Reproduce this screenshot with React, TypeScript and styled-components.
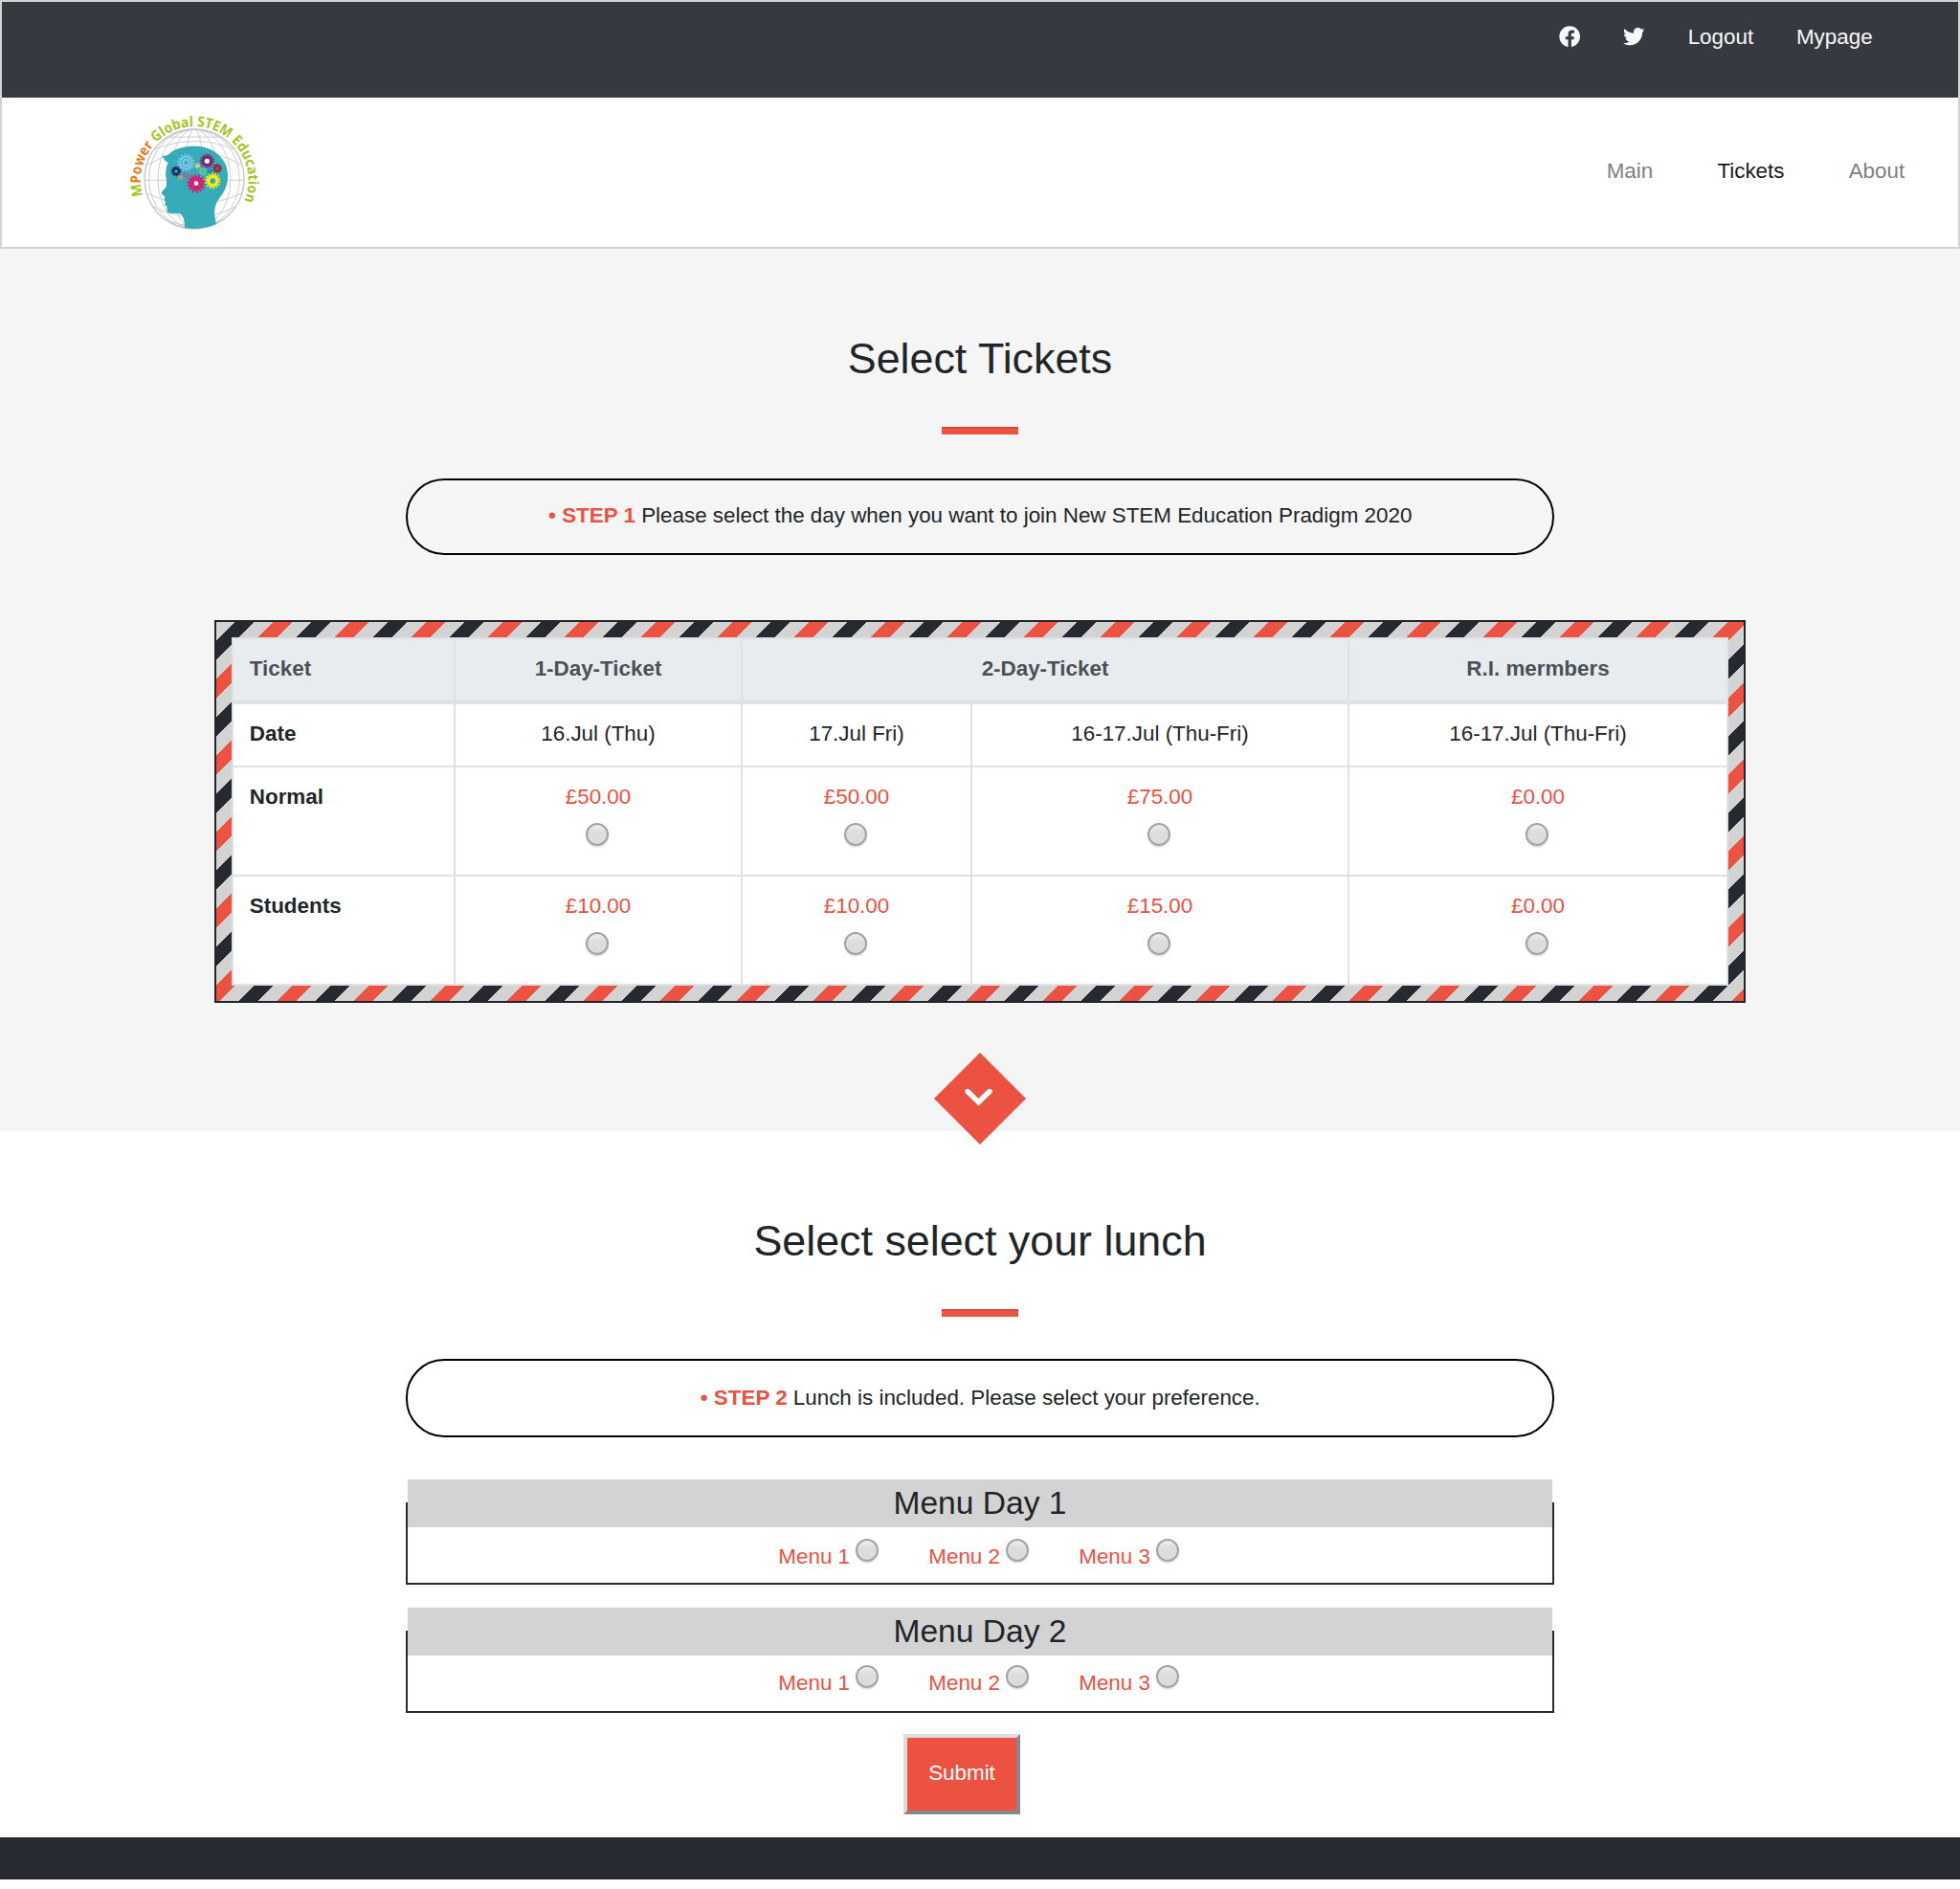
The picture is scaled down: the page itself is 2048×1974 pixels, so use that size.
import React from "react";
import styled, { createGlobalStyle } from "styled-components";
import { FaFacebook, FaTwitter } from "react-icons/fa";

const red = "#eb5242";
const ink = "#212529";
const navy = "#282a32";
const silver = "#d3d3d3";

const GlobalStyle = createGlobalStyle`
  *, *::before, *::after { box-sizing: border-box; }
  body {
    margin: 0;
    background: #fff;
    color: ${ink};
    font-family: "Liberation Sans", Arial, sans-serif;
    font-size: 22.4px;
    line-height: 33.6px;
  }
`;

const Header = styled.header`
  height: 260px;
  border: 2px solid ${silver};
  background: #fff;
`;

const TopBar = styled.div`
  display: flex;
  justify-content: flex-end;
  align-items: flex-start;
  gap: 44.8px;
  height: 100px;
  padding: 19.7px 89.4px 0 0;
  background: #363940;
  color: #f8f9fa;
`;

const TopLink = styled.a`
  display: block;
  color: inherit;
`;

const SocialLink = styled(TopLink)`
  padding-top: 5.1px;
  svg {
    display: block;
    width: 22.4px;
    height: 22.4px;
  }
`;

const NavBar = styled.div`
  display: flex;
  justify-content: space-between;
  align-items: flex-start;
  height: 156px;
  padding: 13px 55.8px 0 130px;
`;

const Nav = styled.nav`
  display: flex;
  gap: 67.2px;
  padding-top: 46.7px;
`;

const NavLink = styled.a<{ $active?: boolean }>`
  color: ${({ $active }) => ($active ? "#191919" : "#808080")};
`;

const Section = styled.section<{ $height: number; $tint?: boolean }>`
  display: flex;
  flex-direction: column;
  align-items: center;
  height: ${({ $height }) => $height}px;
  padding-top: 87px;
  background: ${({ $tint }) => ($tint ? "#f5f5f5" : "#fff")};
`;

const TicketSection = styled(Section)`
  position: relative;
  z-index: 1;
`;

const Title = styled.h2`
  margin: 0;
  font-size: 44.8px;
  line-height: 54px;
  font-weight: 400;
`;

const Rule = styled.hr`
  width: 80px;
  height: 8px;
  margin: 45px 0 0;
  border: 0;
  border-top: 2px solid #d54b3b;
  background: ${red};
`;

const Step = styled.p<{ $gap: number; $height: number; $inset: number }>`
  width: 1200px;
  height: ${({ $height }) => $height}px;
  margin: ${({ $gap }) => $gap}px 0 0;
  padding-top: ${({ $inset }) => $inset}px;
  padding-left: 0.5px;
  border: 2px solid #000;
  border-radius: 40px;
  text-align: center;
`;

const StepLabel = styled.strong`
  color: ${red};
`;

const AirmailFrame = styled.div`
  width: 1600px;
  height: 400px;
  margin-top: 68px;
  padding: 16px;
  border: 2px solid ${ink};
  background: linear-gradient(
      135deg,
      ${silver} 12.5%,
      #272930 12.5% 25%,
      ${silver} 25% 37.5%,
      ${red} 37.5% 50%,
      ${silver} 50% 62.5%,
      #272930 62.5% 75%,
      ${silver} 75% 87.5%,
      ${red} 87.5%
    )
    0 0 / 80px 80px;
`;

const TicketTable = styled.table`
  width: 1564px;
  height: 364px;
  table-layout: fixed;
  border-collapse: separate;
  border-spacing: 2px;
  background: #dee2e6;
`;

const Row = styled.tr<{ $height: number }>`
  height: ${({ $height }) => $height}px;
`;

const HeadCell = styled.th<{ $left?: boolean }>`
  padding: 13.7px 16px 0 ${({ $left }) => ($left ? 16.8 : 16)}px;
  border-bottom: 2px solid #dee2e6;
  background: #e9ecef;
  color: #495057;
  vertical-align: top;
  text-align: ${({ $left }) => ($left ? "left" : "center")};
`;

const RowHead = styled.th`
  padding: 13.7px 16px 0 16.8px;
  background: #fff;
  text-align: left;
  vertical-align: top;
`;

const Cell = styled.td`
  padding: 13.7px 16px 0;
  background: #fff;
  text-align: center;
  vertical-align: top;
`;

const Price = styled.label`
  display: flex;
  flex-direction: column;
  align-items: center;
  color: ${red};
`;

const Radio = styled.input.attrs({ type: "radio" })`
  appearance: none;
  display: block;
  flex: none;
  width: 24px;
  height: 24px;
  margin: 0;
  border: 2px solid #a3a3a3;
  border-radius: 50%;
  background: linear-gradient(#eeeeee 0%, #dddddd 40%, #dcdcdc 100%);
  box-shadow: 0 1.5px 1.5px rgba(0, 0, 0, 0.14);
`;

const PriceRadio = styled(Radio)`
  margin: 10.7px 1.6px 0 0;
`;

const Marker = styled.div`
  position: absolute;
  bottom: -13.7px;
  left: 50%;
  width: 96px;
  height: 96px;
  margin-left: -48px;
  svg { display: block; }
`;

const MenuSet = styled.div<{ $gap: number }>`
  width: 1200px;
  height: 110px;
  margin-top: ${({ $gap }) => $gap}px;
  padding: 0 2px;
  background:
    linear-gradient(${navy}, ${navy}) 0 100% / 2px 86px no-repeat,
    linear-gradient(${navy}, ${navy}) 100% 100% / 2px 86px no-repeat,
    linear-gradient(${navy}, ${navy}) 0 100% / 100% 2px no-repeat;
`;

const MenuTitle = styled.h3`
  height: 50px;
  margin: 0;
  background: ${silver};
  font-size: 33.6px;
  line-height: 50px;
  font-weight: 400;
  text-align: center;
`;

const MenuOptions = styled.div<{ $inset: number }>`
  display: flex;
  justify-content: center;
  gap: 48.2px;
  padding: ${({ $inset }) => $inset}px 0 0 1.4px;
`;

const MenuOption = styled.label`
  display: flex;
  align-items: flex-start;
  gap: 6.2px;
  padding-right: 3.9px;
  color: ${red};
`;

const OptionText = styled.span`
  padding-top: 1.7px;
`;

const SubmitButton = styled.button`
  width: 122px;
  height: 84px;
  margin: 22px 38px 0 0;
  padding: 0 0 2px;
  border: 4px solid;
  border-color: #dcdcdc #888 #888 #dcdcdc;
  background: ${red};
  color: #fff;
  font: inherit;
`;

const Footer = styled.footer`
  height: 44px;
  margin-bottom: 10px;
  border-bottom: 1px solid #2a2029;
  background: ${navy};
`;

interface GearProps {
  x: number;
  y: number;
  r: number;
  color: string;
  hole: string;
  ring?: string;
}

function Gear({ x, y, r, color, hole, ring }: GearProps) {
  const teeth = r > 18 ? 14 : 10;
  const toothRadius = r * 0.88;
  const dash = (Math.PI * toothRadius) / teeth;
  return (
    <g transform={`translate(${x} ${y})`} fill="none">
      <circle r={r * 0.78} fill={color} />
      <circle r={toothRadius} stroke={color} strokeWidth={r * 0.26} strokeDasharray={`${dash} ${dash}`} />
      {ring && <circle r={r * 0.53} stroke={ring} strokeWidth="3" />}
      <circle r={r * (ring ? 0.24 : 0.34)} fill={hole} />
    </g>
  );
}

const teal = "#37abb8";
const gears: GearProps[] = [
  { x: 223, y: 210, r: 27, color: "#7ccaea", hole: teal, ring: "#3f9fc0" },
  { x: 289, y: 205, r: 23, color: "#782a70", hole: "#fff" },
  { x: 192, y: 237, r: 16, color: "#23285f", hole: teal },
  { x: 321, y: 228, r: 15, color: "#a5232f", hole: "#4a6f9a" },
  { x: 259, y: 220, r: 9, color: "#dfd2a2", hole: "#c6a67a" },
  { x: 222, y: 249, r: 10, color: "#d84b93", hole: teal },
  { x: 276, y: 237, r: 13, color: "#68c2a1", hole: "#46ac9d" },
  { x: 298, y: 237, r: 8, color: "#1b70b3", hole: teal },
  { x: 205, y: 257, r: 8, color: "#c3a77c", hole: teal },
  { x: 255, y: 275, r: 29, color: "#d91b73", hole: "#fff", ring: "#a83f86" },
  { x: 307, y: 267, r: 25, color: "#f4ec16", hole: "#379fc0" },
];

function Logo() {
  return (
    <svg width="142" height="130" viewBox="36 45 426 390" role="img" aria-label="MPower Global STEM Education">
      <defs>
        <path id="motto" d="M88 313 A168.6 168.6 0 1 1 404 333" />
        <clipPath id="globe">
          <circle cx="249" cy="261" r="156" />
        </clipPath>
      </defs>
      <g fill="none" stroke="#c6c6c6" strokeWidth="2.6">
        <circle cx="249" cy="261" r="156" strokeWidth="4" />
        <g clipPath="url(#globe)">
          <ellipse cx="249" cy="261" rx="30" ry="156" />
          <ellipse cx="249" cy="261" rx="76" ry="156" />
          <ellipse cx="249" cy="261" rx="114" ry="156" />
          <ellipse cx="249" cy="261" rx="142" ry="156" />
          <path d="M93 265H405" />
          <path d="M165 130Q249 128 333 130M124 168Q249 118 374 168M100 218Q249 130 398 218" />
          <path d="M98 305Q249 375 400 305M118 347Q249 415 380 347M160 390Q249 425 338 390" />
        </g>
      </g>
      <path
        fill={teal}
        d="M148 187C160 192 168 184 178 176C198 162 230 157 255 158C310 160 351 196 354 245C356 275 345 299 330 318C314 340 307 360 318 402C290 415 250 420 219 415C219 398 217 380 207 371C195 366 180 372 167 367C161 361 165 354 163 347L156 342L159 334L154 327C157 319 160 316 147 308C144 303 152 296 160 287C166 272 157 252 160 235C162 220 165 212 168 210C156 207 156 199 148 187Z"
      />
      {gears.map((gear) => (
        <Gear key={`${gear.x}-${gear.y}`} {...gear} />
      ))}
      <text fontFamily='"Open Sans", "Noto Sans", sans-serif' fontWeight="700" fontSize="45" fill="#a3c626">
        <textPath href="#motto" textLength="644" lengthAdjust="spacingAndGlyphs">
          M<tspan fill="#e97a20">Power</tspan> Global STEM Education
        </textPath>
      </text>
    </svg>
  );
}

const columns = [230, 298, 238, 392, 394];
const dates = ["16.Jul (Thu)", "17.Jul Fri)", "16-17.Jul (Thu-Fri)", "16-17.Jul (Thu-Fri)"];
const fares = [
  { name: "Normal", prices: ["£50.00", "£50.00", "£75.00", "£0.00"] },
  { name: "Students", prices: ["£10.00", "£10.00", "£15.00", "£0.00"] },
];
const menus = [
  { day: 1, gap: 44, inset: 12 },
  { day: 2, gap: 24, inset: 10 },
];

export default function App() {
  return (
    <>
      <GlobalStyle />
      <Header>
        <TopBar>
          <SocialLink aria-label="Facebook"><FaFacebook /></SocialLink>
          <SocialLink aria-label="Twitter"><FaTwitter /></SocialLink>
          <TopLink>Logout</TopLink>
          <TopLink>Mypage</TopLink>
        </TopBar>
        <NavBar>
          <Logo />
          <Nav>
            <NavLink>Main</NavLink>
            <NavLink $active>Tickets</NavLink>
            <NavLink>About</NavLink>
          </Nav>
        </NavBar>
      </Header>

      <TicketSection $height={922} $tint>
        <Title>Select Tickets</Title>
        <Rule />
        <Step $gap={46} $height={80} $inset={19.7}>
          <StepLabel>• STEP 1</StepLabel> Please select the day when you want to join New STEM Education Pradigm 2020
        </Step>
        <AirmailFrame>
          <TicketTable>
            <colgroup>
              {columns.map((width, i) => (
                <col key={i} width={width} />
              ))}
            </colgroup>
            <thead>
              <Row $height={66}>
                <HeadCell $left>Ticket</HeadCell>
                <HeadCell>1-Day-Ticket</HeadCell>
                <HeadCell colSpan={2}>2-Day-Ticket</HeadCell>
                <HeadCell>R.I. mermbers</HeadCell>
              </Row>
            </thead>
            <tbody>
              <Row $height={64}>
                <RowHead>Date</RowHead>
                {dates.map((date, i) => (
                  <Cell key={i}>{date}</Cell>
                ))}
              </Row>
              {fares.map(({ name, prices }) => (
                <Row key={name} $height={112}>
                  <RowHead>{name}</RowHead>
                  {prices.map((price, i) => (
                    <Cell key={i}>
                      <Price>
                        {price}
                        <PriceRadio name="ticket" />
                      </Price>
                    </Cell>
                  ))}
                </Row>
              ))}
            </tbody>
          </TicketTable>
        </AirmailFrame>
        <Marker>
          <svg width="96" height="96" viewBox="0 0 96 96">
            <path d="M48 0L96 48L48 96L0 48Z" fill={red} />
            <path d="M35 40.5L46.5 51.8L58 40.5" fill="none" stroke="#fff" strokeWidth="5.4" strokeLinecap="round" />
          </svg>
        </Marker>
      </TicketSection>

      <Section $height={738}>
        <Title>Select select your lunch</Title>
        <Rule />
        <Step $gap={44} $height={82} $inset={21.7}>
          <StepLabel>• STEP 2</StepLabel> Lunch is included. Please select your preference.
        </Step>
        {menus.map(({ day, gap, inset }) => (
          <MenuSet key={day} $gap={gap}>
            <MenuTitle>Menu Day {day}</MenuTitle>
            <MenuOptions $inset={inset}>
              {[1, 2, 3].map((n) => (
                <MenuOption key={n}>
                  <OptionText>Menu {n}</OptionText>
                  <Radio name={`day-${day}`} />
                </MenuOption>
              ))}
            </MenuOptions>
          </MenuSet>
        ))}
        <SubmitButton>Submit</SubmitButton>
      </Section>
      <Footer />
    </>
  );
}
